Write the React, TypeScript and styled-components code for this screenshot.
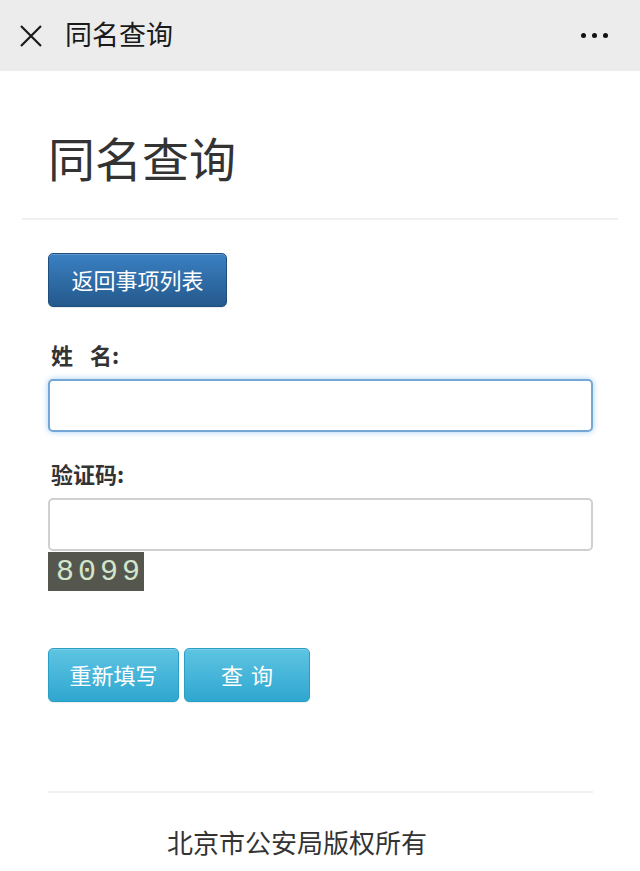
import React from "react";
import styled, { createGlobalStyle } from "styled-components";

const Global = createGlobalStyle`
  html, body { margin: 0; padding: 0; background: #fff; }
  body { font-family: "Noto Sans CJK SC", "Noto Sans", sans-serif; color: #333; }
  * { box-sizing: border-box; }
`;

const Page = styled.div`
  width: 640px;
  min-height: 871px;
  background: #fff;
`;

const TopBar = styled.div`
  height: 71px;
  background: #ececec;
  display: flex;
  align-items: center;
  padding: 0 20px 0 19px;
`;

const TopTitle = styled.div`
  flex: 1;
  margin-left: 22px;
  font-size: 27px;
  line-height: 1;
  color: #1a1a1a;
  padding-bottom: 4px;
`;

const Dots = styled.div`
  display: flex;
  gap: 6px;
  margin-right: 12px;
`;

const Dot = styled.span`
  width: 5px;
  height: 5px;
  border-radius: 50%;
  background: #111;
`;

const Container = styled.div`
  padding: 0 22px;
`;

const PageHeader = styled.div`
  padding: 60px 26px 35px;
  border-bottom: 2px solid #f0f0f0;
`;

const H1 = styled.h1`
  margin: 0;
  font-size: 47px;
  font-weight: 400;
  line-height: 52px;
  color: #333;
`;

const Form = styled.div`
  padding: 0 25px 0 26px;
  display: flex;
  flex-direction: column;
  align-items: flex-start;
`;

const Btn = styled.button<{ $variant: "primary" | "info"; $w: number }>`
  width: ${(p) => p.$w}px;
  height: 54px;
  border-radius: 5px;
  font-family: "Noto Sans CJK SC", sans-serif;
  font-size: 22px;
  color: #fff;
  padding: 0 0 2px;
  cursor: pointer;
  display: inline-flex;
  align-items: center;
  justify-content: center;
  ${(p) =>
    p.$variant === "primary"
      ? `background: linear-gradient(to bottom, #3a80c2 0%, #24598c 100%);
         border: 1px solid #1f4f7e;`
      : `background: linear-gradient(to bottom, #5ec4e2 0%, #2fa7d0 100%);
         border: 1px solid #2a9fc6;`}
  box-shadow: inset 0 1px 0 rgba(255,255,255,0.2), 0 1px 1px rgba(0,0,0,0.08);
`;

const BackBtn = styled(Btn)`
  margin-top: 33px;
`;

const Label = styled.label`
  margin-top: 32px;
  margin-bottom: 10px;
  margin-left: 3px;
  font-size: 22px;
  font-weight: 700;
  line-height: 30px;
  color: #333;
  display: flex;
  align-items: center;
`;

const Label2 = styled(Label)`
  margin-top: 26px;
`;

const Gap = styled.span<{ $w: number }>`
  display: inline-block;
  width: ${(p) => p.$w}px;
`;

const Input = styled.input<{ $focus?: boolean }>`
  display: block;
  width: 100%;
  height: 53px;
  margin: 0;
  border-radius: 5px;
  font-size: 22px;
  padding: 0 16px;
  outline: none;
  background: #fff;
  ${(p) =>
    p.$focus
      ? `border: 2px solid #74a7d6;
         box-shadow: 0 0 6px rgba(102,175,233,0.6);`
      : `border: 2px solid #d0d0d0;`}
`;

const Captcha = styled.div`
  width: 96px;
  height: 39px;
  margin-top: 1px;
  background: #55574f;
  display: flex;
  align-items: center;
  font-family: "Liberation Mono", monospace;
  font-size: 30px;
  font-weight: 400;
  color: #d3e6cc;
  letter-spacing: 4px;
  padding-left: 8px;
  line-height: 1;
  overflow: hidden;
  white-space: nowrap;
`;

const Actions = styled.div`
  margin-top: 57px;
  display: flex;
  gap: 5px;
`;

const Footer = styled.div`
  margin: 89px 47px 0 48px;
  border-top: 2px solid #f0f0f0;
  padding: 31px 0 0 119px;
`;

const FooterText = styled.div`
  font-size: 26px;
  line-height: 36px;
  color: #333;
`;

const CloseIcon = () => (
  <svg width="24" height="24" viewBox="0 0 24 24">
    <path d="M2 2 L22 22 M22 2 L2 22" stroke="#1a1a1a" strokeWidth="2.2" strokeLinecap="butt" />
  </svg>
);

export default function App() {
  return (
    <Page>
      <Global />
      <TopBar>
        <CloseIcon />
        <TopTitle>同名查询</TopTitle>
        <Dots>
          <Dot />
          <Dot />
          <Dot />
        </Dots>
      </TopBar>
      <Container>
        <PageHeader>
          <H1>同名查询</H1>
        </PageHeader>
        <Form>
          <BackBtn $variant="primary" $w={179}>返回事项列表</BackBtn>
          <Label>
            姓<Gap $w={17} />名:
          </Label>
          <Input $focus />
          <Label2>验证码:</Label2>
          <Input />
          <Captcha>8099</Captcha>
          <Actions>
            <Btn $variant="info" $w={131}>重新填写</Btn>
            <Btn $variant="info" $w={126}>
              查<Gap $w={8} />询
            </Btn>
          </Actions>
        </Form>
      </Container>
      <Footer>
        <FooterText>北京市公安局版权所有</FooterText>
      </Footer>
    </Page>
  );
}
